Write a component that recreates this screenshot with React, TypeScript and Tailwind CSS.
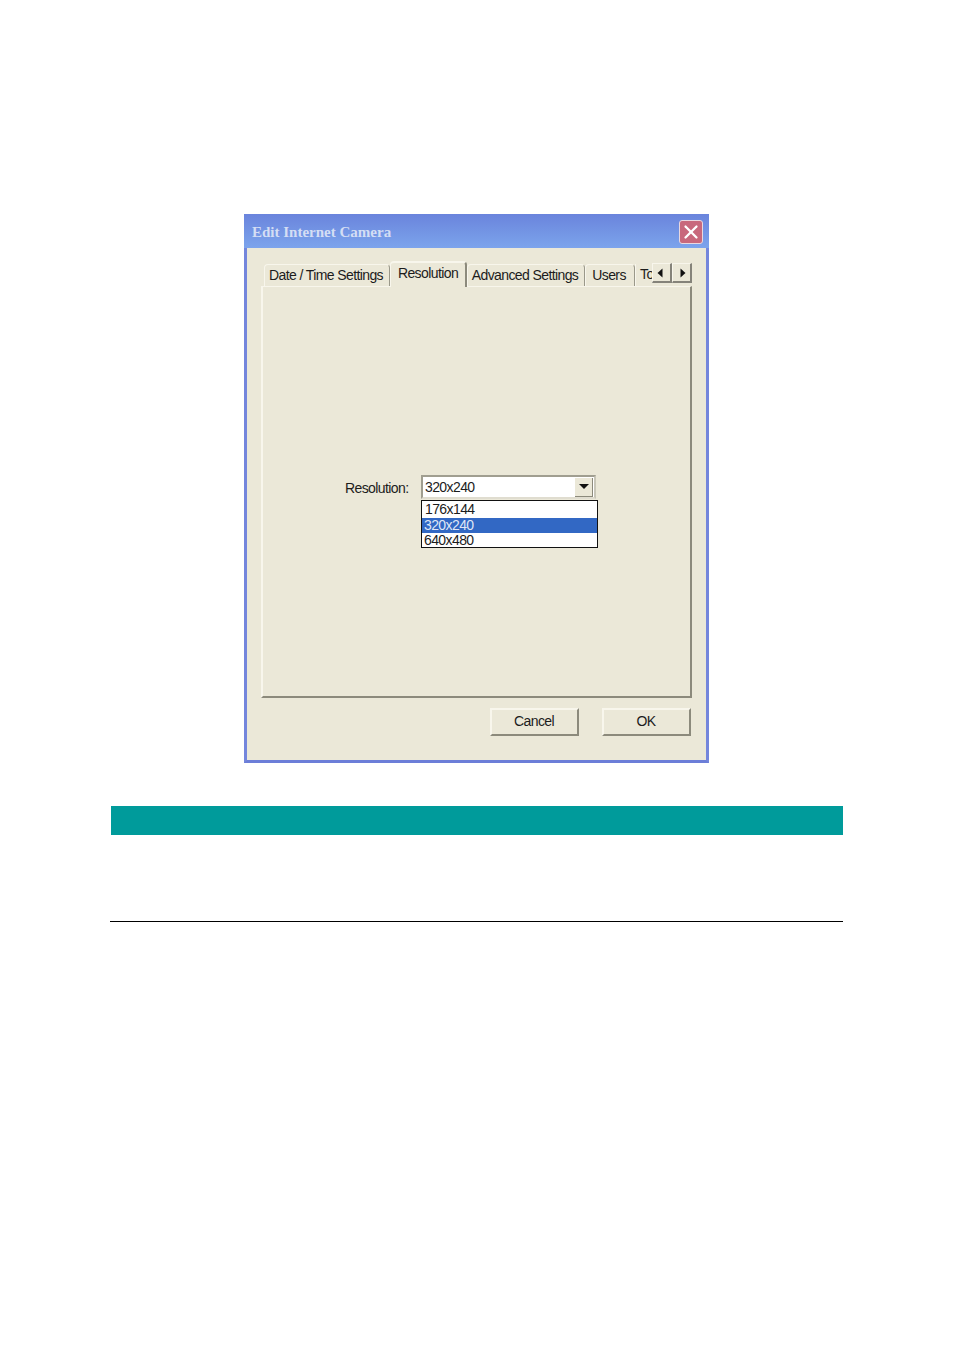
import { X } from 'lucide-react';

const ui = "font-['Liberation_Sans',Arial,sans-serif] text-[14px] tracking-[-0.6px] text-[#1c1c1c]";

function Tab({ label, width, active }: { label: string; width: string; active?: boolean }) {
  if (active) {
    return (
      <div
        className={`relative z-10 -mb-px flex h-[26px] items-start justify-center rounded-t-sm border-t-2 border-l border-t-[#f8f6ec] border-l-[#f8f6ec] border-r-2 border-r-[#8c8a7c] bg-[#ebe8d8] pt-[2px] leading-[16px] ${width}`}
      >
        {label}
      </div>
    );
  }
  return (
    <div
      className={`flex h-[22px] items-start justify-center overflow-hidden rounded-t-sm border-t border-l border-t-[#f8f6ec] border-l-[#f8f6ec] border-r border-r-[#9a988a] pr-[2px] pt-[2px] leading-[16px] ${width}`}
    >
      {label}
    </div>
  );
}

function ScrollButton({ dir }: { dir: 'left' | 'right' }) {
  return (
    <div
      className={`flex h-[20px] w-[20px] items-center justify-center border-t border-l border-r-2 border-b-2 border-t-[#f8f6ec] border-l-[#f8f6ec] border-r-[#85837a] border-b-[#85837a] bg-[#ebe8d8] ${dir === 'left' ? 'pr-[3px]' : 'pl-[2px]'}`}
    >
      <svg width="6" height="10" viewBox="0 0 6 10">
        <path d={dir === 'left' ? 'M5.5 0.5V9.5L0.5 5Z' : 'M0.5 0.5V9.5L5.5 5Z'} fill="#111" />
      </svg>
    </div>
  );
}

function DialogButton({ label }: { label: string }) {
  return (
    <div className="flex h-[28px] w-[89px] items-center justify-center border-2 border-t-[#f8f6ec] border-l-[#f8f6ec] border-r-[#8c8a7c] border-b-[#8c8a7c] bg-[#ebe8d8] pb-px pr-px">
      {label}
    </div>
  );
}

export default function App() {
  return (
    <div className="min-h-[1350px] w-[954px] bg-white pt-[214px]">
      <div
        className={`ml-[244px] flex h-[549px] w-[465px] flex-col border-x-[3px] border-b-[3px] border-x-[#7486dc] border-b-[#6c7ed8] bg-[#ebe8d8] ${ui}`}
      >
        <div className="-mx-[3px] flex h-[34px] shrink-0 items-center justify-between bg-gradient-to-b from-[#6a84dc] to-[#7ca4ec] pl-[8px] pr-[6px]">
          <span className="mt-[2px] font-['Liberation_Serif',serif] text-[15px] font-bold tracking-[0px] text-[#d4def4]">
            Edit Internet Camera
          </span>
          <div className="mt-[2px] flex h-[24px] w-[24px] items-center justify-center rounded-[3px] border border-[#e8d8e0] bg-[#c8687c]">
            <X size={22} strokeWidth={2.5} className="text-white" />
          </div>
        </div>

        <div className="relative ml-[17px] mt-[13px] flex h-[25px] items-end">
          <Tab label="Date / Time Settings" width="w-[126px]" />
          <Tab label="Resolution" width="w-[77px]" active />
          <Tab label="Advanced Settings" width="w-[118px]" />
          <Tab label="Users" width="w-[50px]" />
          <div className="flex h-[22px] w-[17px] items-start overflow-hidden border-l border-l-[#f8f6ec] pl-[4px] pt-[2px] leading-[16px]">
            To
          </div>
          <div className="absolute left-[388px] top-[2px] flex">
            <ScrollButton dir="left" />
            <ScrollButton dir="right" />
          </div>
        </div>

        <div className="relative ml-[14px] h-[412px] w-[431px] border-t border-l-2 border-r-2 border-b-2 border-t-[#f8f6ec] border-l-[#f8f6ec] border-r-[#8c8a7c] border-b-[#8c8a7c] pl-[82px] pt-[188px]">
          <div className="flex items-start">
            <span className="mt-[3px] w-[76px]">Resolution:</span>
            <div className="flex h-[24px] w-[175px] items-center justify-between border-2 border-t-[#a09e90] border-l-[#a09e90] border-r-[#c8c6b8] border-b-[#e0ddd0] bg-white pl-[2px] pr-px">
              <span className="mt-px">320x240</span>
              <div className="flex h-[19px] w-[18px] items-center justify-center border-r border-b border-r-[#8c8a7c] border-b-[#8c8a7c] bg-[#ebe8d8] pl-px">
                <svg width="10" height="5" viewBox="0 0 10 5">
                  <path d="M0 0H10L5 5Z" fill="#111" />
                </svg>
              </div>
            </div>
          </div>
          <div className="absolute left-[158px] top-[213px] flex h-[48px] w-[177px] flex-col border border-[#111] bg-white pt-px leading-[15.5px]">
            <div className="pl-[3px]">176x144</div>
            <div className="bg-[#3268c4] pl-[2px] text-[#dfe6f6]">320x240</div>
            <div className="pl-[2px]">640x480</div>
          </div>
        </div>

        <div className="ml-[243px] mt-[10px] flex gap-[23px]">
          <DialogButton label="Cancel" />
          <DialogButton label="OK" />
        </div>
      </div>

      <div className="ml-[111px] mt-[43px] h-[29px] w-[732px] bg-[#009b9b]" />
      <div className="ml-[110px] mt-[86px] h-px w-[733px] bg-black" />
    </div>
  );
}
